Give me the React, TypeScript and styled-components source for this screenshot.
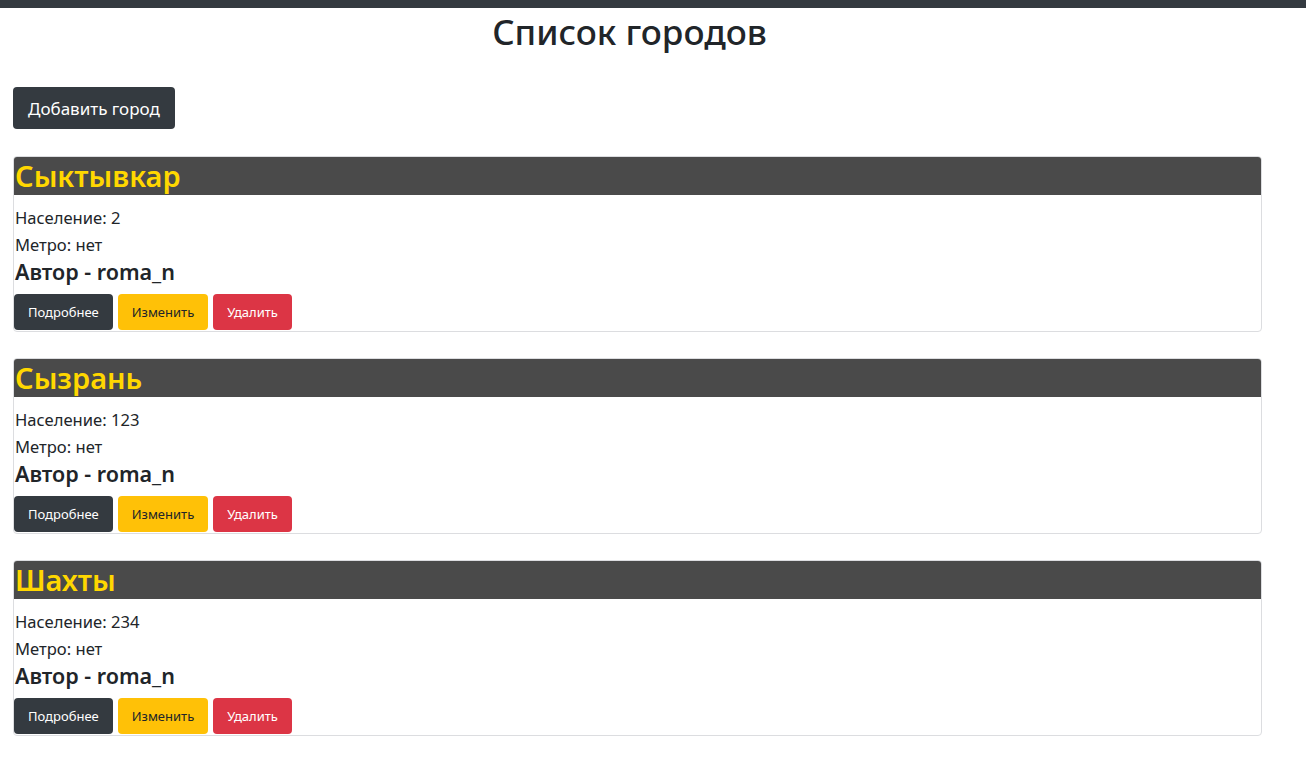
import React from "react";
import styled, { createGlobalStyle } from "styled-components";

const GlobalStyle = createGlobalStyle`
  html, body { margin: 0; padding: 0; background: #ffffff; }
  body { font-family: "Noto Sans", "Open Sans", sans-serif; color: #212529; }
  * { box-sizing: border-box; }
`;

const TopBar = styled.div`
  height: 8px;
  background: #343a40;
`;

const Page = styled.main`
  width: 1275px;
  padding-left: 13px;
  display: flex;
  flex-direction: column;
  align-items: flex-start;
`;

const Title = styled.h1`
  align-self: stretch;
  margin: 0;
  padding-right: 29px;
  height: 79px;
  padding-top: 4px;
  text-align: center;
  font-size: 35px;
  font-weight: 500;
  line-height: 40px;
  color: #212529;
`;

const AddButton = styled.button`
  height: 42px;
  padding: 0 15px;
  border: none;
  border-radius: 4px;
  background: #343a40;
  color: #ffffff;
  font-family: inherit;
  font-size: 17px;
  margin-bottom: 27px;
`;

const CardList = styled.div`
  display: flex;
  flex-direction: column;
  gap: 26px;
  width: 1249px;
`;

const Card = styled.section`
  border: 1px solid #dcdde0;
  border-radius: 4px;
  overflow: hidden;
  padding-bottom: 1px;
`;

const CardHeader = styled.h2`
  margin: 0;
  height: 38px;
  background: #4a4a4a;
  color: #ffd700;
  font-size: 29px;
  font-weight: 600;
  line-height: 38px;
  padding-left: 1px;
`;

const CardBody = styled.div`
  padding-top: 9px;
`;

const Line = styled.div<{ $big?: boolean }>`
  height: 27px;
  line-height: 27px;
  padding-left: 1px;
  font-size: ${(p) => (p.$big ? "21.5px" : "16.6px")};
  font-weight: ${(p) => (p.$big ? 600 : 400)};
`;

const Actions = styled.div`
  display: flex;
  gap: 5px;
  margin-top: 9px;
`;

const variants = {
  dark: { bg: "#343a40", fg: "#ffffff" },
  warning: { bg: "#ffc107", fg: "#212529" },
  danger: { bg: "#dc3545", fg: "#ffffff" },
};

const SmallButton = styled.button<{ $variant: keyof typeof variants }>`
  height: 36px;
  padding: 0 14px;
  border: none;
  border-radius: 4px;
  font-family: inherit;
  font-size: 13px;
  background: ${(p) => variants[p.$variant].bg};
  color: ${(p) => variants[p.$variant].fg};
`;

const cities = [
  { name: "Сыктывкар", population: 2, metro: "нет", author: "roma_n" },
  { name: "Сызрань", population: 123, metro: "нет", author: "roma_n" },
  { name: "Шахты", population: 234, metro: "нет", author: "roma_n" },
];

export default function App() {
  return (
    <>
      <GlobalStyle />
      <TopBar />
      <Page>
        <Title>Список городов</Title>
        <AddButton>Добавить город</AddButton>
        <CardList>
          {cities.map((c) => (
            <Card key={c.name}>
              <CardHeader>{c.name}</CardHeader>
              <CardBody>
                <Line>Население: {c.population}</Line>
                <Line>Метро: {c.metro}</Line>
                <Line $big>Автор - {c.author}</Line>
                <Actions>
                  <SmallButton $variant="dark">Подробнее</SmallButton>
                  <SmallButton $variant="warning">Изменить</SmallButton>
                  <SmallButton $variant="danger">Удалить</SmallButton>
                </Actions>
              </CardBody>
            </Card>
          ))}
        </CardList>
      </Page>
    </>
  );
}
